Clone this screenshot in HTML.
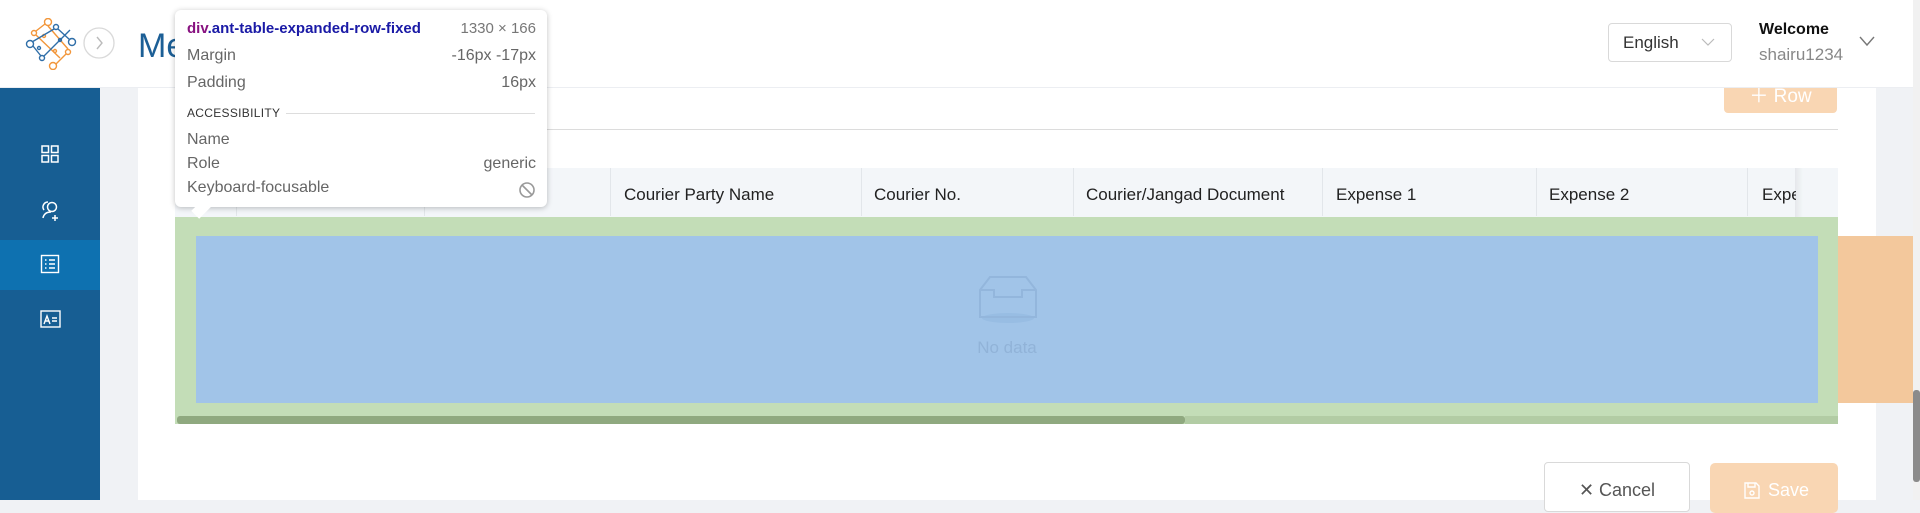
<!DOCTYPE html>
<html><head><meta charset="utf-8"><style>
*{margin:0;padding:0;box-sizing:border-box}
body{width:1920px;height:500px;overflow:hidden;background:#f0f2f5;font-family:"Liberation Sans",sans-serif;position:relative}
.a{position:absolute}
.hd{left:0;top:0;width:1913px;height:88px;background:#fff;border-bottom:1px solid #eceef2}
.sb{left:0;top:88px;width:100px;height:412px;background:#175e93}
.act{left:0;top:240px;width:100px;height:50px;background:#0e71b0}
.ct{left:138px;top:88px;width:1738px;height:412px;background:#fff}
.th{font-size:17px;color:#222;top:185px}
.vl{width:1px;height:48px;top:168px;background:#e2e6ea}
.tt{font-size:16px;color:#666}
</style></head><body>
<div class="a ct"></div>
<div class="a" style="left:1876px;top:88px;width:37px;height:412px;background:#f0f2f5"></div>
<div class="a" style="left:175px;top:129px;width:1663px;height:1px;background:#dcdcdc"></div>
<div class="a" style="left:1724px;top:80px;width:113px;height:33px;background:#f9d6b3;border-radius:4px;color:#fff;font-size:19px;line-height:33px;text-align:center">＋ Row</div>
<div class="a" style="left:175px;top:168px;width:1663px;height:49px;background:#f3f6f9"></div>
<div class="a vl" style="left:236px"></div><div class="a vl" style="left:424px"></div><div class="a vl" style="left:610px"></div><div class="a vl" style="left:861px"></div><div class="a vl" style="left:1073px"></div><div class="a vl" style="left:1322px"></div><div class="a vl" style="left:1536px"></div><div class="a vl" style="left:1747px"></div>
<div class="a th" style="left:624px">Courier Party Name</div>
<div class="a th" style="left:874px">Courier No.</div>
<div class="a th" style="left:1086px">Courier/Jangad Document</div>
<div class="a th" style="left:1336px">Expense 1</div>
<div class="a th" style="left:1549px">Expense 2</div>
<div class="a th" style="left:1762px;width:34px;overflow:hidden;white-space:nowrap">Expense 3</div>
<div class="a" style="left:1795px;top:168px;width:8px;height:49px;background:linear-gradient(90deg,rgba(0,0,0,.06),rgba(0,0,0,0))"></div>
<div class="a" style="left:175px;top:217px;width:1663px;height:207px;background:#c3ddb7"></div>
<div class="a" style="left:177px;top:416px;width:1008px;height:8px;background:#8fa97f;border-radius:3px"></div>
<div class="a" style="left:1185px;top:416px;width:653px;height:8px;background:#b2cca4"></div>
<div class="a" style="left:196px;top:236px;width:1622px;height:167px;background:#a1c4e8"></div>
<div class="a" style="left:1838px;top:236px;width:75px;height:167px;background:#f3c89c"></div>
<svg class="a" style="left:975px;top:274px" width="66" height="52" viewBox="0 0 66 52"><ellipse cx="33" cy="44" rx="26" ry="5" fill="#98bde3"/><path d="M5 16 L15 3 H51 L61 16 V43 H5 Z M5 16 H19 V23 H47 V16 H61" fill="none" stroke="#93b6dc" stroke-width="2"/></svg>
<div class="a" style="left:960px;top:338px;width:94px;text-align:center;font-size:17px;color:#91b3d8">No data</div>
<div class="a" style="left:1544px;top:462px;width:146px;height:50px;border:1px solid #d9d9d9;border-radius:4px;background:#fff;font-size:18px;color:#555;padding-top:17px;text-align:center">✕ Cancel</div>
<div class="a" style="left:1710px;top:463px;width:128px;height:50px;border-radius:5px;background:#f9d6b3;font-size:18px;color:#fff;padding:17px 0 0 34px"><svg style="vertical-align:-3px;margin-right:8px" width="16" height="17" fill="none" stroke="#fff" stroke-width="1.4"><path d="M1 1 H12 L15 4 V16 H1 Z M4 1 V5 H11 V1"/><circle cx="8" cy="11" r="2"/></svg>Save</div>
<div class="a" style="left:1913px;top:0;width:7px;height:500px;background:#f1f1f1"></div>
<div class="a" style="left:1913px;top:390px;width:7px;height:92px;background:#8b8b8b;border-radius:3px"></div>
<div class="a hd"></div>
<svg class="a" style="left:24px;top:18px" width="54" height="52" viewBox="0 0 54 52" fill="none" stroke-width="1.4"><g stroke="#f2963a"><circle cx="24" cy="4" r="3.5"/><circle cx="10" cy="15" r="2.5"/><circle cx="29" cy="48" r="3.5"/><circle cx="44" cy="34" r="2.5"/><path d="M21 6 L12 13 M12 17 L36 40 M24 8 L44 31 M42 36 L32 46"/><circle cx="20" cy="18" r="1.5"/><circle cx="31" cy="33" r="1.5"/></g><g stroke="#2f6ea8"><circle cx="6" cy="26" r="3.5"/><circle cx="48" cy="24" r="3.5"/><circle cx="32" cy="9" r="2.5"/><circle cx="18" cy="40" r="2.5"/><path d="M9 28 L17 38 M20 38 L46 12 M34 11 L46 22 M30 11 L8 24"/><circle cx="15" cy="30" r="1.5"/><circle cx="36" cy="22" r="1.5"/></g></svg>
<svg class="a" style="left:83px;top:27px" width="32" height="32"><circle cx="16" cy="16" r="15" fill="#fff" stroke="#d9d9d9" stroke-width="1.3"/><path d="M14 10 L19 16 L14 22" fill="none" stroke="#bbb" stroke-width="1.4"/></svg>
<div class="a" style="left:138px;top:27px;font-size:34px;color:#1c5f96">Me</div>
<div class="a" style="left:1608px;top:23px;width:124px;height:39px;border:1px solid #d9d9d9;border-radius:4px;font-size:17px;color:#333;padding:9px 0 0 14px">English<svg class="a" style="left:92px;top:14px" width="14" height="9"><path d="M1 1 L7 7 L13 1" fill="none" stroke="#bbb" stroke-width="1.2"/></svg></div>
<div class="a" style="left:1759px;top:21px;font-size:16px;font-weight:bold;color:#111">Welcome</div>
<div class="a" style="left:1759px;top:45px;font-size:17px;color:#888">shairu1234</div>
<svg class="a" style="left:1859px;top:36px" width="16" height="11"><path d="M1 1 L8 9 L15 1" fill="none" stroke="#777" stroke-width="1.4"/></svg>
<div class="a sb"></div><div class="a act"></div>
<svg class="a" style="left:40px;top:144px" width="20" height="20" fill="none" stroke="#fff" stroke-width="1.5"><rect x="2" y="2" width="6.5" height="6.5"/><rect x="11.5" y="2" width="6.5" height="6.5"/><rect x="2" y="11.5" width="6.5" height="6.5"/><rect x="11.5" y="11.5" width="6.5" height="6.5"/></svg>
<svg class="a" style="left:40px;top:199px" width="22" height="22" fill="none" stroke="#fff" stroke-width="1.5"><circle cx="12" cy="8" r="4.5"/><path d="M8 3 A5 5 0 0 0 4 11 M3 19 C4 14 8 13 11 13 M15 16 V22 M12 19 H18"/></svg>
<svg class="a" style="left:40px;top:254px" width="20" height="20" fill="none" stroke="#fff" stroke-width="1.4"><rect x="1.5" y="1.5" width="17" height="17"/><path d="M5 6 H6.5 M9 6 H15 M5 10 H6.5 M9 10 H15 M5 14 H6.5 M9 14 H15"/></svg>
<svg class="a" style="left:40px;top:310px" width="21" height="18" fill="none" stroke="#fff" stroke-width="1.4"><rect x="1" y="1" width="19" height="16"/><path d="M4 14 L7 6 L10 14 M5 11 H9 M12 8 H17 M12 11 H17"/></svg>
<div class="a" style="left:175px;top:10px;width:372px;height:197px;background:#fff;border-radius:6px;box-shadow:0 1px 6px rgba(0,0,0,.25)"></div>
<div class="a" style="left:194px;top:200px;width:16px;height:16px;background:#fff;transform:rotate(45deg) scale(.7,1.2)"></div>
<div class="a" style="left:187px;top:20px;font-size:15px;font-weight:bold;color:#1a1aa6"><span style="color:#881280">div</span>.ant-table-expanded-row-fixed</div>
<div class="a tt" style="right:1384px;top:20px;font-size:15px;color:#777">1330 × 166</div>
<div class="a tt" style="left:187px;top:47px">Margin</div><div class="a tt" style="right:1384px;top:47px">-16px -17px</div>
<div class="a tt" style="left:187px;top:74px">Padding</div><div class="a tt" style="right:1384px;top:74px">16px</div>
<div class="a" style="left:187px;top:106px;font-size:12px;color:#333;letter-spacing:.3px">ACCESSIBILITY</div>
<div class="a" style="left:286px;top:113px;width:249px;height:1px;background:#ddd"></div>
<div class="a tt" style="left:187px;top:131px">Name</div>
<div class="a tt" style="left:187px;top:155px">Role</div><div class="a tt" style="right:1384px;top:155px">generic</div>
<div class="a tt" style="left:187px;top:179px">Keyboard-focusable</div>
<svg class="a" style="left:518px;top:181px" width="18" height="18" fill="none" stroke="#999" stroke-width="1.6"><circle cx="9" cy="9" r="7"/><path d="M4 4 L14 14"/></svg>
</body></html>
